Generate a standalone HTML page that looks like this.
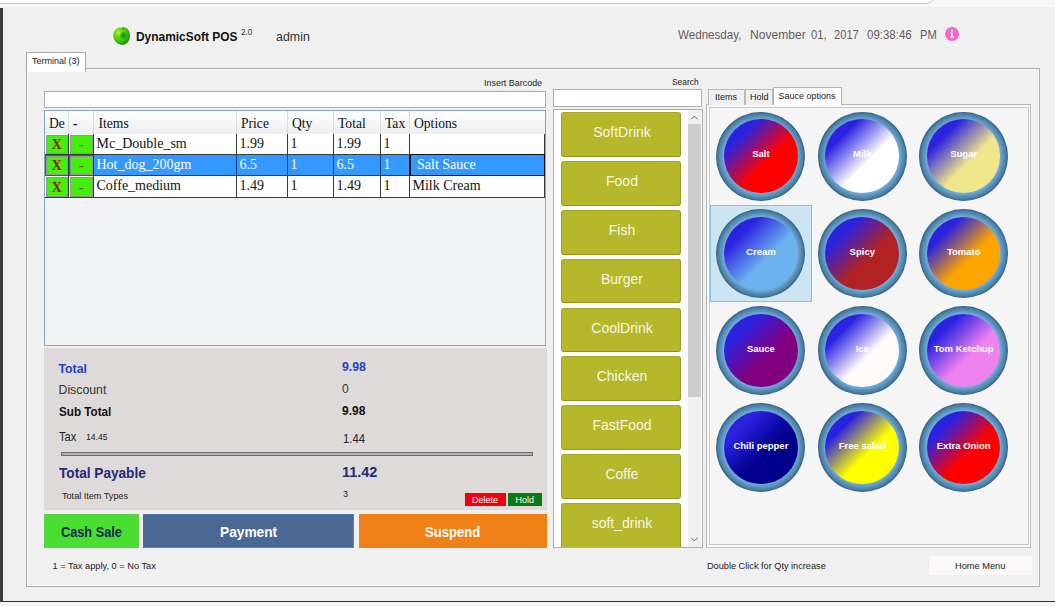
<!DOCTYPE html>
<html><head><meta charset="utf-8"><title>DynamicSoft POS</title>
<style>
html,body{margin:0;padding:0;}
body{width:1055px;height:606px;position:relative;overflow:hidden;background:#f0f0f0;font-family:"Liberation Sans",sans-serif;color:#222;}
.a{position:absolute;box-sizing:border-box;}
.t{position:absolute;white-space:nowrap;line-height:1;transform-origin:0 0;}
.cell{position:absolute;box-sizing:border-box;font-family:"Liberation Serif",serif;font-size:14px;line-height:20px;white-space:nowrap;overflow:hidden;color:#111;}
.gb{position:absolute;box-sizing:border-box;font-family:"Liberation Serif",serif;background:#46ee0c;border:1px solid #8c9a86;text-align:center;white-space:nowrap;}
.cat{position:absolute;left:561px;width:120px;background:#b5b82b;border:1px solid #a3a627;border-bottom-color:#8f9222;border-right-color:#999c25;box-sizing:border-box;color:#f6f6e6;font-size:14px;text-align:center;border-radius:3px;}
.sc{position:absolute;width:89px;height:89px;border-radius:50%;}
.sc .in{position:absolute;left:7.7px;top:7.7px;width:73.6px;height:73.6px;border-radius:50%;}
.sc span{position:absolute;left:-10px;right:-10px;top:36.7px;text-align:center;color:#fff;font-weight:bold;font-size:9.5px;line-height:12px;white-space:nowrap;}
</style></head><body>
<!-- top strip -->
<div class="a" style="left:0;top:0;width:1055px;height:7px;background:#f8f8f8;"></div>
<div class="a" style="left:-20px;top:-20px;width:956px;height:24px;border:1px solid #c2c2c2;border-radius:0 0 10px 0;background:#fefefe;"></div>
<!-- left dark bar -->
<div class="a" style="left:0;top:8px;width:3px;height:594px;background:#3c3c3c;"></div>
<!-- bottom line -->
<div class="a" style="left:0;top:601px;width:1055px;height:1px;background:#333;"></div>
<div class="a" style="left:0;top:602px;width:1055px;height:4px;background:#f6f6f6;"></div>

<!-- header -->
<div class="t" style="left:136.40px;top:29.5px;font-size:13px;font-weight:bold;color:#111;transform:scaleX(0.9174);">DynamicSoft POS</div>
<div class="t" style="left:240.60px;top:27.5px;font-size:8.6px;color:#333;transform:scaleX(0.9537);">2.0</div>
<div class="t" style="left:276.20px;top:30px;font-size:13px;color:#333;transform:scaleX(0.9545);">admin</div>

<div class="t" style="left:677.70px;top:28px;font-size:13.1px;color:#6a5a5a;transform:scaleX(0.8854);">Wednesday,</div>
<div class="t" style="left:750.20px;top:28px;font-size:13.1px;color:#6a5a5a;transform:scaleX(0.9217);">November</div>
<div class="t" style="left:810.70px;top:28px;font-size:13.1px;color:#6a5a5a;transform:scaleX(0.8622);">01,</div>
<div class="t" style="left:834.30px;top:28px;font-size:13.1px;color:#6a5a5a;transform:scaleX(0.8508);">2017</div>
<div class="t" style="left:867.00px;top:28px;font-size:13.1px;color:#6a5a5a;transform:scaleX(0.8765);">09:38:46</div>
<div class="t" style="left:919.60px;top:28px;font-size:13.1px;color:#6a5a5a;transform:scaleX(0.8550);">PM</div>

<!-- main tab -->
<div class="a" style="left:26px;top:68px;width:1014px;height:519px;border:1px solid #acacac;background:#f0f0f0;box-shadow:inset 0 0 0 1px #fbfbfb;"></div>
<div class="a" style="left:26px;top:52px;width:60px;height:19.5px;border:1px solid #acacac;border-bottom:none;background:#fff;"></div>
<div class="t" style="left:32px;top:57px;font-size:9px;color:#222;">Terminal (3)</div>

<!-- barcode -->
<div class="t" style="left:483.60px;top:79.2px;font-size:9.1px;color:#222;transform:scaleX(0.9818);">Insert Barcode</div>
<div class="a" style="left:44px;top:91px;width:502px;height:17px;border:1px solid #abadb3;background:#fff;"></div>
<!-- grid -->
<div class="a" id="grid" style="left:44px;top:110px;width:502px;height:236px;border:1px solid #82a4c6;background:#f1f2f3;"></div>
<div class="a" style="left:45px;top:111px;width:500px;height:23px;background:linear-gradient(#ffffff,#f5f6f8 50%,#eceef1);"></div>
<div class="cell" style="left:45px;top:111px;width:24px;height:23px;border-right:1px solid #dadada;padding-left:4px;line-height:25px;font-size:13.6px;">De</div>
<div class="cell" style="left:69px;top:111px;width:25px;height:23px;border-right:1px solid #dadada;padding-left:4px;line-height:25px;font-size:13.6px;font-weight:bold;">-</div>
<div class="cell" style="left:94px;top:111px;width:143px;height:23px;border-right:1px solid #dadada;padding-left:4.5px;line-height:25px;font-size:13.6px;">Items</div>
<div class="cell" style="left:237px;top:111px;width:51px;height:23px;border-right:1px solid #dadada;padding-left:4px;line-height:25px;font-size:13.6px;">Price</div>
<div class="cell" style="left:288px;top:111px;width:46px;height:23px;border-right:1px solid #dadada;padding-left:4px;line-height:25px;font-size:13.6px;">Qty</div>
<div class="cell" style="left:334px;top:111px;width:47px;height:23px;border-right:1px solid #dadada;padding-left:4px;line-height:25px;font-size:13.6px;">Total</div>
<div class="cell" style="left:381px;top:111px;width:29px;height:23px;border-right:1px solid #dadada;padding-left:4px;line-height:25px;font-size:13.6px;">Tax</div>
<div class="cell" style="left:410px;top:111px;width:135px;height:23px;padding-left:4px;line-height:25px;font-size:13.6px;">Options</div>
<div class="a" style="left:45px;top:134px;width:500px;height:21px;background:#ffffff;border-bottom:1px solid #3a3a3a;"></div>
<div class="a" style="left:68px;top:134px;width:1px;height:21px;background:#3a3a3a;"></div>
<div class="gb" style="left:45.5px;top:134.5px;width:22.5px;height:19.5px;color:#8b1a00;font-weight:bold;line-height:18px;font-size:14px;">X</div>
<div class="a" style="left:93px;top:134px;width:1px;height:21px;background:#3a3a3a;"></div>
<div class="gb" style="left:69.5px;top:134.5px;width:23.5px;height:19.5px;color:#6a6400;font-weight:bold;line-height:18px;font-size:14px;">-</div>
<div class="cell" style="left:94px;top:134px;width:143px;height:20px;border-right:1px solid #3a3a3a;padding-left:2.5px;color:#111111;line-height:19px;">Mc_Double_sm</div>
<div class="cell" style="left:237px;top:134px;width:51px;height:20px;border-right:1px solid #3a3a3a;padding-left:2.5px;color:#111111;line-height:19px;">1.99</div>
<div class="cell" style="left:288px;top:134px;width:46px;height:20px;border-right:1px solid #3a3a3a;padding-left:2.5px;color:#111111;line-height:19px;">1</div>
<div class="cell" style="left:334px;top:134px;width:47px;height:20px;border-right:1px solid #3a3a3a;padding-left:2.5px;color:#111111;line-height:19px;">1.99</div>
<div class="cell" style="left:381px;top:134px;width:29px;height:20px;border-right:1px solid #3a3a3a;padding-left:2.5px;color:#111111;line-height:19px;">1</div>
<div class="cell" style="left:410px;top:134px;width:135px;height:20px;border-right:1px solid #3a3a3a;padding-left:2.5px;color:#111111;line-height:19px;"></div>
<div class="a" style="left:45px;top:155px;width:500px;height:21px;background:#3399ff;border-bottom:1px solid #1b3f7c;"></div>
<div class="a" style="left:45px;top:155px;width:49px;height:21px;background:#2a5da8;"></div>
<div class="a" style="left:68px;top:155px;width:1px;height:21px;background:#1b3f7c;"></div>
<div class="gb" style="left:45.5px;top:155.5px;width:22.5px;height:19.5px;color:#8b1a00;font-weight:bold;line-height:18px;font-size:14px;">X</div>
<div class="a" style="left:93px;top:155px;width:1px;height:21px;background:#1b3f7c;"></div>
<div class="gb" style="left:69.5px;top:155.5px;width:23.5px;height:19.5px;color:#6a6400;font-weight:bold;line-height:18px;font-size:14px;">-</div>
<div class="cell" style="left:94px;top:155px;width:143px;height:20px;border-right:1px solid #1b3f7c;padding-left:2.5px;color:#ffffff;line-height:19px;">Hot_dog_200gm</div>
<div class="cell" style="left:237px;top:155px;width:51px;height:20px;border-right:1px solid #1b3f7c;padding-left:2.5px;color:#ffffff;line-height:19px;">6.5</div>
<div class="cell" style="left:288px;top:155px;width:46px;height:20px;border-right:1px solid #1b3f7c;padding-left:2.5px;color:#ffffff;line-height:19px;">1</div>
<div class="cell" style="left:334px;top:155px;width:47px;height:20px;border-right:1px solid #1b3f7c;padding-left:2.5px;color:#ffffff;line-height:19px;">6.5</div>
<div class="cell" style="left:381px;top:155px;width:29px;height:20px;border-right:1px solid #1b3f7c;padding-left:2.5px;color:#ffffff;line-height:19px;">1</div>
<div class="cell" style="left:410px;top:155px;width:135px;height:20px;border-right:1px solid #1b3f7c;padding-left:7px;color:#ffffff;line-height:19px;">Salt Sauce</div>
<div class="a" style="left:45px;top:176px;width:500px;height:22px;background:#ffffff;border-bottom:1px solid #3a3a3a;"></div>
<div class="a" style="left:68px;top:176px;width:1px;height:22px;background:#3a3a3a;"></div>
<div class="gb" style="left:45.5px;top:176.5px;width:22.5px;height:20.5px;color:#8b1a00;font-weight:bold;line-height:19px;font-size:14px;">X</div>
<div class="a" style="left:93px;top:176px;width:1px;height:22px;background:#3a3a3a;"></div>
<div class="gb" style="left:69.5px;top:176.5px;width:23.5px;height:20.5px;color:#6a6400;font-weight:bold;line-height:19px;font-size:14px;">-</div>
<div class="cell" style="left:94px;top:176px;width:143px;height:21px;border-right:1px solid #3a3a3a;padding-left:2.5px;color:#111111;line-height:20px;">Coffe_medium</div>
<div class="cell" style="left:237px;top:176px;width:51px;height:21px;border-right:1px solid #3a3a3a;padding-left:2.5px;color:#111111;line-height:20px;">1.49</div>
<div class="cell" style="left:288px;top:176px;width:46px;height:21px;border-right:1px solid #3a3a3a;padding-left:2.5px;color:#111111;line-height:20px;">1</div>
<div class="cell" style="left:334px;top:176px;width:47px;height:21px;border-right:1px solid #3a3a3a;padding-left:2.5px;color:#111111;line-height:20px;">1.49</div>
<div class="cell" style="left:381px;top:176px;width:29px;height:21px;border-right:1px solid #3a3a3a;padding-left:2.5px;color:#111111;line-height:20px;">1</div>
<div class="cell" style="left:410px;top:176px;width:135px;height:21px;border-right:1px solid #3a3a3a;padding-left:2.5px;color:#111111;line-height:20px;">Milk Cream</div>
<div class="a" style="left:409px;top:154px;width:136px;height:22px;border:1px solid #111;border-width:1px 1px 1px 2px;"></div>

<!-- totals -->
<div class="a" style="left:44px;top:348px;width:503px;height:162px;background:#dedada;"></div>
<div class="t" style="left:58.5px;top:363px;font-size:12.3px;font-weight:bold;color:#2343c8;">Total</div>
<div class="t" style="left:342px;top:361px;font-size:12.3px;font-weight:bold;color:#2343c8;">9.98</div>
<div class="t" style="left:58.5px;top:384.3px;font-size:12.3px;color:#333;">Discount</div>
<div class="t" style="left:342px;top:382.5px;font-size:12px;color:#333;">0</div>
<div class="t" style="left:58.5px;top:406px;font-size:12.3px;font-weight:bold;color:#111;transform:scaleX(0.95);">Sub Total</div>
<div class="t" style="left:342px;top:405px;font-size:12px;font-weight:bold;color:#111;">9.98</div>
<div class="t" style="left:58.5px;top:431px;font-size:12px;color:#222;transform:scaleX(0.93);">Tax</div>
<div class="t" style="left:86px;top:433px;font-size:9px;color:#222;transform:scaleX(0.96);">14.45</div>
<div class="t" style="left:342.5px;top:433px;font-size:12px;color:#222;transform:scaleX(0.94);">1.44</div>
<div class="a" style="left:60.5px;top:452px;width:472px;height:4px;background:#b2b2b2;border:1px solid #6c6c6c;"></div>
<div class="t" style="left:58.5px;top:465px;font-size:15px;font-weight:bold;color:#1f2c78;transform:scaleX(0.908);">Total Payable</div>
<div class="t" style="left:342px;top:464px;font-size:15px;font-weight:bold;color:#1f2c78;transform:scaleX(0.96);">11.42</div>
<div class="t" style="left:62px;top:492.3px;font-size:9.1px;color:#222;">Total Item Types</div>
<div class="t" style="left:343px;top:489.6px;font-size:9px;color:#222;">3</div>
<div class="a" style="left:464.5px;top:492.5px;width:41px;height:13.5px;background:#f2000d;color:#fff;font-size:9px;text-align:center;line-height:14px;">Delete</div>
<div class="a" style="left:508px;top:492.5px;width:33.5px;height:13.5px;background:#0c7a12;color:#fff;font-size:9px;text-align:center;line-height:14px;">Hold</div>
<!-- buttons -->
<div class="a" style="left:44px;top:514px;width:95px;height:34px;background:#4ade33;border:1px solid #5fd04a;"></div>
<div class="t" style="left:60.8px;top:524.5px;font-size:14px;font-weight:bold;color:#0f2a4a;transform:scaleX(0.91);">Cash Sale</div>
<div class="a" style="left:143px;top:514px;width:211px;height:34px;background:#4a6893;border:1px solid #3b8eea;border-top-color:#4a78b0;border-left-color:#4a6893;"></div>
<div class="t" style="left:220px;top:524.5px;font-size:14px;font-weight:bold;color:#fff;transform:scaleX(0.98);">Payment</div>
<div class="a" style="left:358.5px;top:514px;width:188.5px;height:34px;background:#ef8118;"></div>
<div class="t" style="left:425px;top:524.5px;font-size:14px;font-weight:bold;color:#fff;transform:scaleX(0.935);">Suspend</div>
<div class="t" style="left:52.5px;top:561.5px;font-size:9.25px;color:#222;">1 = Tax apply, 0 = No Tax</div>

<!-- search -->
<div class="t" style="left:672.00px;top:78px;font-size:9.1px;color:#222;transform:scaleX(0.9262);">Search</div>
<div class="a" style="left:553px;top:89px;width:149px;height:17.5px;border:1px solid #abadb3;background:#fff;"></div>
<!-- category list -->
<div class="a" style="left:553px;top:109px;width:149.5px;height:439px;border:1px solid #abadb3;background:#fff;"></div>
<div class="a" style="left:688px;top:110px;width:13px;height:437px;background:#f0f0f0;"></div>
<div class="a" style="left:688px;top:124px;width:12.5px;height:272.7px;background:#cdcdcd;"></div>
<svg class="a" style="left:688px;top:110px;" width="13" height="14" viewBox="0 0 13 14"><path d="M3.2 9.3 L6.4 6.1 L9.6 9.3" fill="none" stroke="#606060" stroke-width="1"/></svg>
<svg class="a" style="left:688px;top:533px;" width="13" height="14" viewBox="0 0 13 14"><path d="M3.2 4.7 L6.4 7.9 L9.6 4.7" fill="none" stroke="#606060" stroke-width="1"/></svg>
<div class="cat" style="top:112.3px;height:44.7px;line-height:38.5px;padding-left:2px;">SoftDrink</div>
<div class="cat" style="top:161.1px;height:44.7px;line-height:38.5px;padding-left:2px;">Food</div>
<div class="cat" style="top:209.9px;height:44.7px;line-height:38.5px;padding-left:2px;">Fish</div>
<div class="cat" style="top:258.7px;height:44.7px;line-height:38.5px;padding-left:2px;">Burger</div>
<div class="cat" style="top:307.5px;height:44.7px;line-height:38.5px;padding-left:2px;">CoolDrink</div>
<div class="cat" style="top:356.3px;height:44.7px;line-height:38.5px;padding-left:2px;">Chicken</div>
<div class="cat" style="top:405.1px;height:44.7px;line-height:38.5px;padding-left:2px;">FastFood</div>
<div class="cat" style="top:453.9px;height:44.7px;line-height:38.5px;padding-left:2px;">Coffe</div>
<div class="cat" style="top:502.7px;height:44.3px;line-height:38.5px;padding-left:2px;border-bottom:none;border-radius:3px 3px 0 0;">soft_drink</div>

<!-- sauce tabs -->
<div class="a" style="left:706px;top:104px;width:325px;height:444px;border:1px solid #c4c4c4;border-top-color:#b4b4b4;border-left-color:#b4b4b4;background:#fbfbfb;"></div>
<div class="a" style="left:708.5px;top:107px;width:320px;height:437.6px;border:1px solid #c6c6c6;background:#f5f5f5;"></div>
<div class="a" style="left:708px;top:89px;width:37px;height:16px;border:1px solid #b9b9b9;border-bottom:none;background:#efefef;"></div>
<div class="t" style="left:715px;top:92.8px;font-size:9px;color:#222;">Items</div>
<div class="a" style="left:744.5px;top:89px;width:28.5px;height:16px;border:1px solid #b9b9b9;border-bottom:none;background:#efefef;"></div>
<div class="t" style="left:750px;top:92.8px;font-size:9px;color:#222;">Hold</div>
<div class="a" style="left:772.5px;top:87px;width:69.5px;height:18px;border:1px solid #b4b4b4;border-bottom:none;background:#fff;"></div>
<div class="t" style="left:778.5px;top:91.5px;font-size:9px;color:#222;">Sauce options</div>
<!-- selected cell -->
<div class="a" style="left:710px;top:205px;width:102px;height:97px;background:#cbe5f3;border:1px solid #7fc4e6;"></div>
<div class="sc" style="left:716.4px;top:111.69999999999999px;background:radial-gradient(circle closest-side,#74aedb 0,#74aedb 82%,#6aa3ce 85%,#5990b8 90%,#4a80a6 95%,#3c6d90 98%,#2b5676 100%);"><div class="in" style="background:linear-gradient(135deg,#2b22e0 0%,#2b22e0 23%,#ff0000 58%,#ff0000 100%);"></div><span>Salt</span></div>
<div class="sc" style="left:817.8px;top:111.69999999999999px;background:radial-gradient(circle closest-side,#74aedb 0,#74aedb 82%,#6aa3ce 85%,#5990b8 90%,#4a80a6 95%,#3c6d90 98%,#2b5676 100%);"><div class="in" style="background:linear-gradient(135deg,#2b22e0 0%,#2b22e0 23%,#ffffff 58%,#ffffff 100%);"></div><span>Milk</span></div>
<div class="sc" style="left:919.2px;top:111.69999999999999px;background:radial-gradient(circle closest-side,#74aedb 0,#74aedb 82%,#6aa3ce 85%,#5990b8 90%,#4a80a6 95%,#3c6d90 98%,#2b5676 100%);"><div class="in" style="background:linear-gradient(135deg,#2b22e0 0%,#2b22e0 23%,#f0e68c 58%,#f0e68c 100%);"></div><span>Sugar</span></div>
<div class="sc" style="left:716.4px;top:209.0px;background:radial-gradient(circle closest-side,#74aedb 0,#74aedb 82%,#6aa3ce 85%,#5990b8 90%,#4a80a6 95%,#3c6d90 98%,#2b5676 100%);"><div class="in" style="background:linear-gradient(135deg,#2b22e0 0%,#2b22e0 23%,#6cb2ee 58%,#6cb2ee 100%);"></div><span>Cream</span></div>
<div class="sc" style="left:817.8px;top:209.0px;background:radial-gradient(circle closest-side,#74aedb 0,#74aedb 82%,#6aa3ce 85%,#5990b8 90%,#4a80a6 95%,#3c6d90 98%,#2b5676 100%);"><div class="in" style="background:linear-gradient(135deg,#2b22e0 0%,#2b22e0 23%,#b22222 58%,#b22222 100%);"></div><span>Spicy</span></div>
<div class="sc" style="left:919.2px;top:209.0px;background:radial-gradient(circle closest-side,#74aedb 0,#74aedb 82%,#6aa3ce 85%,#5990b8 90%,#4a80a6 95%,#3c6d90 98%,#2b5676 100%);"><div class="in" style="background:linear-gradient(135deg,#2b22e0 0%,#2b22e0 23%,#ffa500 58%,#ffa500 100%);"></div><span>Tomato</span></div>
<div class="sc" style="left:716.4px;top:306.1px;background:radial-gradient(circle closest-side,#74aedb 0,#74aedb 82%,#6aa3ce 85%,#5990b8 90%,#4a80a6 95%,#3c6d90 98%,#2b5676 100%);"><div class="in" style="background:linear-gradient(135deg,#2b22e0 0%,#2b22e0 23%,#800080 58%,#800080 100%);"></div><span>Sauce</span></div>
<div class="sc" style="left:817.8px;top:306.1px;background:radial-gradient(circle closest-side,#74aedb 0,#74aedb 82%,#6aa3ce 85%,#5990b8 90%,#4a80a6 95%,#3c6d90 98%,#2b5676 100%);"><div class="in" style="background:linear-gradient(135deg,#2b22e0 0%,#2b22e0 23%,#fffafa 58%,#fffafa 100%);"></div><span>Ice</span></div>
<div class="sc" style="left:919.2px;top:306.1px;background:radial-gradient(circle closest-side,#74aedb 0,#74aedb 82%,#6aa3ce 85%,#5990b8 90%,#4a80a6 95%,#3c6d90 98%,#2b5676 100%);"><div class="in" style="background:linear-gradient(135deg,#2b22e0 0%,#2b22e0 23%,#ee82ee 58%,#ee82ee 100%);"></div><span>Tom Ketchup</span></div>
<div class="sc" style="left:716.4px;top:403.1px;background:radial-gradient(circle closest-side,#74aedb 0,#74aedb 82%,#6aa3ce 85%,#5990b8 90%,#4a80a6 95%,#3c6d90 98%,#2b5676 100%);"><div class="in" style="background:linear-gradient(135deg,#2b22e0 0%,#2b22e0 23%,#00008b 58%,#00008b 100%);"></div><span>Chili pepper</span></div>
<div class="sc" style="left:817.8px;top:403.1px;background:radial-gradient(circle closest-side,#74aedb 0,#74aedb 82%,#6aa3ce 85%,#5990b8 90%,#4a80a6 95%,#3c6d90 98%,#2b5676 100%);"><div class="in" style="background:linear-gradient(135deg,#2b22e0 0%,#2b22e0 23%,#ffff00 58%,#ffff00 100%);"></div><span>Free salad</span></div>
<div class="sc" style="left:919.2px;top:403.1px;background:radial-gradient(circle closest-side,#74aedb 0,#74aedb 82%,#6aa3ce 85%,#5990b8 90%,#4a80a6 95%,#3c6d90 98%,#2b5676 100%);"><div class="in" style="background:linear-gradient(135deg,#2b22e0 0%,#2b22e0 23%,#ff0000 58%,#ff0000 100%);"></div><span>Extra Onion</span></div>

<div class="t" style="left:707.40px;top:561.7px;font-size:9.2px;color:#222;transform:scaleX(0.9981);">Double Click for Qty increase</div>
<div class="a" style="left:929px;top:556px;width:102.5px;height:19px;background:#fbf9f9;"></div>
<div class="t" style="left:955.00px;top:561.5px;font-size:9.3px;color:#222;transform:scaleX(0.9949);">Home Menu</div>

<!-- icons -->
<svg class="a" style="left:111px;top:24px;" width="22" height="24" viewBox="0 0 22 24">
<defs><radialGradient id="ap" cx="32%" cy="30%" r="75%"><stop offset="0" stop-color="#b4f22a"/><stop offset="0.35" stop-color="#5ad80e"/><stop offset="0.75" stop-color="#35b808"/><stop offset="1" stop-color="#1f8a06"/></radialGradient>
<radialGradient id="sp" cx="50%" cy="50%" r="50%"><stop offset="0" stop-color="#067a1c" stop-opacity="0.95"/><stop offset="0.5" stop-color="#0f9018" stop-opacity="0.6"/><stop offset="1" stop-color="#2bb40a" stop-opacity="0"/></radialGradient></defs>
<path d="M10.6 3.6 C13 2.6 16.5 3.6 18 7 C19.6 10.5 19 15.5 16.6 18.6 C14.6 21 11.6 21.4 9.2 20.6 C5.6 19.6 2.6 16.4 2.3 12 C2.1 8 4.6 4.6 8 3.6 C9 3.3 9.8 3.4 10.6 3.6 Z" fill="url(#ap)"/>
<ellipse cx="12.4" cy="11.4" rx="4.2" ry="4.6" fill="url(#sp)"/>
<path d="M11.6 5.2 Q12 3.6 12.6 3.2 L13.2 3.8 Q12.6 4.6 12.6 5.6 Z" fill="#3c7a18"/>
</svg>
<svg class="a" style="left:944px;top:26px;" width="16" height="16" viewBox="0 0 16 16">
<circle cx="8" cy="8" r="7" fill="#f166d1"/>
<circle cx="8" cy="4.6" r="1.2" fill="#fff"/>
<path d="M6.3 6.8 H8.9 V10.8 H9.8 V11.8 H6.2 V10.8 H7.1 V7.8 H6.3 Z" fill="#fff"/>
</svg>
</body></html>
